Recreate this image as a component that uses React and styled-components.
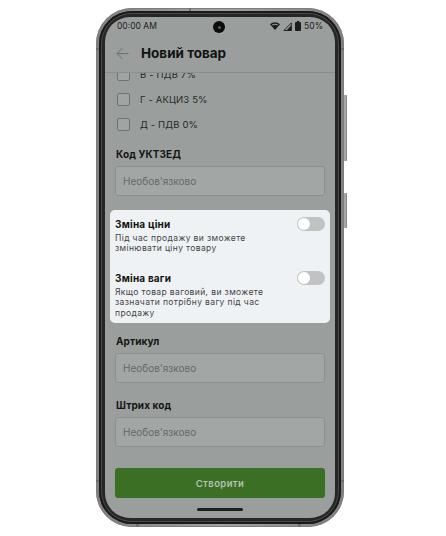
import React from "react";
import styled, { createGlobalStyle } from "styled-components";

const Global = createGlobalStyle`
  html, body { margin: 0; padding: 0; background: #fff; }
  body { font-family: "Inter", "Noto Sans", sans-serif; }
`;

const Page = styled.div`
  width: 446px;
  height: 536px;
  box-sizing: border-box;
  padding: 8px 0 0 96px;
  overflow: hidden;
`;

const Shell = styled.div`
  position: relative;
  width: 248px;
  height: 519px;
  box-sizing: border-box;
  padding: 3px;
  border-radius: 36px;
  background: linear-gradient(90deg, #808080, #a3a3a3 50%, #808080);
  box-shadow: inset 0 0 0 1px #7d7d7d;
`;

const Bezel = styled.div`
  height: 100%;
  box-sizing: border-box;
  padding: 6px;
  border-radius: 33px;
  background: #262626;
  box-shadow: inset 0 0 0 2px #1a1a1a, inset 0 0 0 3px #484848;
`;

const SideKey = styled.div`
  position: absolute;
  left: 248px;
  top: ${(p) => p.$top}px;
  width: 2px;
  height: ${(p) => p.$h}px;
  background: #a8a8a8;
  border-right: 1px solid #8a8a8a;
  border-radius: 0 1px 1px 0;
`;

const Band = styled.div`
  position: absolute;
  background: #6f6f6f;
  ${(p) => p.$css}
`;

const Screen = styled.div`
  position: relative;
  height: 100%;
  border-radius: 25px;
  overflow: hidden;
  background: #9a9f9e;
  display: flex;
  flex-direction: column;
`;

const StatusBar = styled.div`
  height: 20px;
  flex: none;
  box-sizing: border-box;
  display: flex;
  align-items: flex-start;
  justify-content: space-between;
  padding: 3px 12px 0 12px;
  font-size: 8.5px;
  line-height: 12px;
  color: #1c1e1e;
`;

const StatusRight = styled.div`
  display: flex;
  align-items: center;
  gap: 3px;
`;

const Camera = styled.div`
  position: absolute;
  top: 4px;
  left: 108px;
  width: 12px;
  height: 12px;
  border-radius: 50%;
  background: #0c0c0c;
  display: flex;
  align-items: center;
  justify-content: center;
  &::after {
    content: "";
    width: 3px;
    height: 3px;
    border-radius: 50%;
    background: #55595c;
  }
`;

const Header = styled.header`
  height: 36px;
  flex: none;
  box-sizing: border-box;
  display: flex;
  align-items: center;
  gap: 12px;
  padding: 0 0 3px 11px;
  border-bottom: 1px solid #8a8f8e;
`;

const Title = styled.h1`
  margin: 0;
  font-size: 13.5px;
  font-weight: 700;
  color: #111312;
  letter-spacing: 0;
`;

const Scroll = styled.div`
  flex: 1;
  min-height: 0;
  overflow: hidden;
  display: flex;
  flex-direction: column;
  justify-content: flex-end;
  & > * { flex: none; }
`;

const Checks = styled.div`
  display: flex;
  flex-direction: column;
  gap: 12px;
  padding: 0 0 0 12px;
  margin-bottom: 17px;
`;

const CheckRow = styled.label`
  display: flex;
  align-items: center;
  gap: 10px;
  height: 13px;
  font-size: 9.5px;
  letter-spacing: 0.15px;
  color: #262928;
`;

const Box = styled.span`
  width: 11px;
  height: 11px;
  border: 1px solid #6f7473;
  border-radius: 2px;
  background: #a0a5a4;
`;

const Field = styled.div`
  padding: 0 10px;
  margin-bottom: ${(p) => p.$after}px;
`;

const FieldLabel = styled.div`
  font-size: 10px;
  line-height: 12px;
  font-weight: 700;
  letter-spacing: 0.1px;
  color: #141615;
  margin-bottom: 6px;
  padding-left: 1px;
`;

const Input = styled.div`
  height: 30px;
  box-sizing: border-box;
  display: flex;
  align-items: center;
  padding: 0 7px;
  border: 1px solid #8b908f;
  border-radius: 3px;
  background: #a2a7a6;
  font-size: 10px;
  color: #656a69;
`;

const Card = styled.section`
  margin: 0 5px 12px;
  height: 113px;
  box-sizing: border-box;
  padding: 4px 5px 0;
  border-radius: 5px;
  background: #eff2f4;
  display: flex;
  flex-direction: column;
  gap: 14.4px;
`;

const Option = styled.div`
  display: flex;
  justify-content: space-between;
  align-items: flex-start;
`;

const OptionText = styled.div`
  width: 170px;
`;

const OptionTitle = styled.div`
  font-size: 10px;
  line-height: 12px;
  margin-top: 4px;
  font-weight: 700;
  letter-spacing: 0.2px;
  color: #121413;
  margin-bottom: 3px;
`;

const OptionHint = styled.div`
  font-size: 8.5px;
  line-height: 10.3px;
  letter-spacing: 0.38px;
  color: #414544;
`;

const Toggle = styled.div`
  width: 28px;
  height: 14px;
  flex: none;
  margin: 3px 0 0 0;
  box-sizing: border-box;
  padding: 1px;
  border-radius: 7px;
  background: #c0c3c3;
  &::before {
    content: "";
    display: block;
    width: 12px;
    height: 12px;
    border-radius: 50%;
    background: #fff;
  }
`;

const Footer = styled.div`
  flex: none;
  height: 71px;
  box-sizing: border-box;
  padding: 21px 10px 0;
  display: flex;
  flex-direction: column;
  align-items: center;
`;

const Submit = styled.div`
  width: 100%;
  height: 30px;
  flex: none;
  border-radius: 3px;
  background: #3b7024;
  color: #b8c0b2;
  font-size: 9.5px;
  font-weight: 600;
  letter-spacing: 0.4px;
  display: flex;
  align-items: center;
  justify-content: center;
`;

const HomeBar = styled.div`
  width: 46px;
  height: 3px;
  margin-top: 10px;
  border-radius: 2px;
  background: #1d1f1f;
`;

const Back = () => (
  <svg width="13" height="13" viewBox="0 0 13 13" fill="none" stroke="#6b706f" strokeWidth="1">
    <path d="M12.5 6.5H1M6.2 1.2 1 6.5l5.2 5.3" />
  </svg>
);

const Wifi = () => (
  <svg width="10" height="8" viewBox="0 0 10 8" fill="#1c1e1e">
    <path d="M0 2.2C2.8-.5 7.2-.5 10 2.2L5 8z" />
    <path d="M1.9 2.7c1.9-1.4 4.3-1.4 6.2 0l-.7.9c-1.5-1-3.3-1-4.8 0z" fill="#9a9f9e" />
  </svg>
);

const Signal = () => (
  <svg width="9" height="9" viewBox="0 0 9 9" fill="none" stroke="#1c1e1e">
    <path d="M8.3.9v7.6H.9z" strokeWidth="0.9" />
    <path d="M8.5 3v6H3z" fill="#1c1e1e" stroke="none" />
  </svg>
);

const Battery = () => (
  <svg width="6" height="10" viewBox="0 0 6 10" fill="#1c1e1e">
    <rect x="1.8" y="0" width="2.4" height="1.2" />
    <rect x="0" y="1" width="6" height="9" rx="1" />
  </svg>
);

const Labelled = ({ label, after }) => (
  <Field $after={after}>
    <FieldLabel>{label}</FieldLabel>
    <Input>Необов'язково</Input>
  </Field>
);

export default function App() {
  return (
    <Page>
      <Global />
      <Shell>
        <SideKey $top={87} $h={66} />
        <SideKey $top={185} $h={35} />
        <Band $css="left:93px;top:0;width:2px;height:3px;" />
        <Band $css="left:0;top:40px;width:3px;height:2px;" />
        <Band $css="right:0;top:40px;width:3px;height:2px;" />
        <Band $css="left:0;top:472px;width:3px;height:2px;" />
        <Band $css="right:0;top:472px;width:3px;height:2px;" />
        <Band $css="left:40px;bottom:0;width:3px;height:3px;" />
        <Band $css="right:43px;bottom:0;width:3px;height:3px;" />
        <Bezel>
          <Screen>
            <Camera />
            <StatusBar>
              <span>00:00 AM</span>
              <StatusRight>
                <Wifi />
                <Signal />
                <Battery />
                <span>50%</span>
              </StatusRight>
            </StatusBar>
            <Header>
              <Back />
              <Title>Новий товар</Title>
            </Header>
            <Scroll>
              <Checks>
                <CheckRow><Box />В - ПДВ 7%</CheckRow>
                <CheckRow><Box />Г - АКЦИЗ 5%</CheckRow>
                <CheckRow><Box />Д - ПДВ 0%</CheckRow>
              </Checks>
              <Labelled label="Код УКТЗЕД" after={14} />
              <Card>
                <Option>
                  <OptionText>
                    <OptionTitle>Зміна ціни</OptionTitle>
                    <OptionHint>Під час продажу ви зможете змінювати ціну товару</OptionHint>
                  </OptionText>
                  <Toggle />
                </Option>
                <Option>
                  <OptionText>
                    <OptionTitle>Зміна ваги</OptionTitle>
                    <OptionHint>Якщо товар ваговий, ви зможете зазначати потрібну вагу під час продажу</OptionHint>
                  </OptionText>
                  <Toggle />
                </Option>
              </Card>
              <Labelled label="Артикул" after={16} />
              <Labelled label="Штрих код" after={0} />
            </Scroll>
            <Footer>
              <Submit>Створити</Submit>
              <HomeBar />
            </Footer>
          </Screen>
        </Bezel>
      </Shell>
    </Page>
  );
}
